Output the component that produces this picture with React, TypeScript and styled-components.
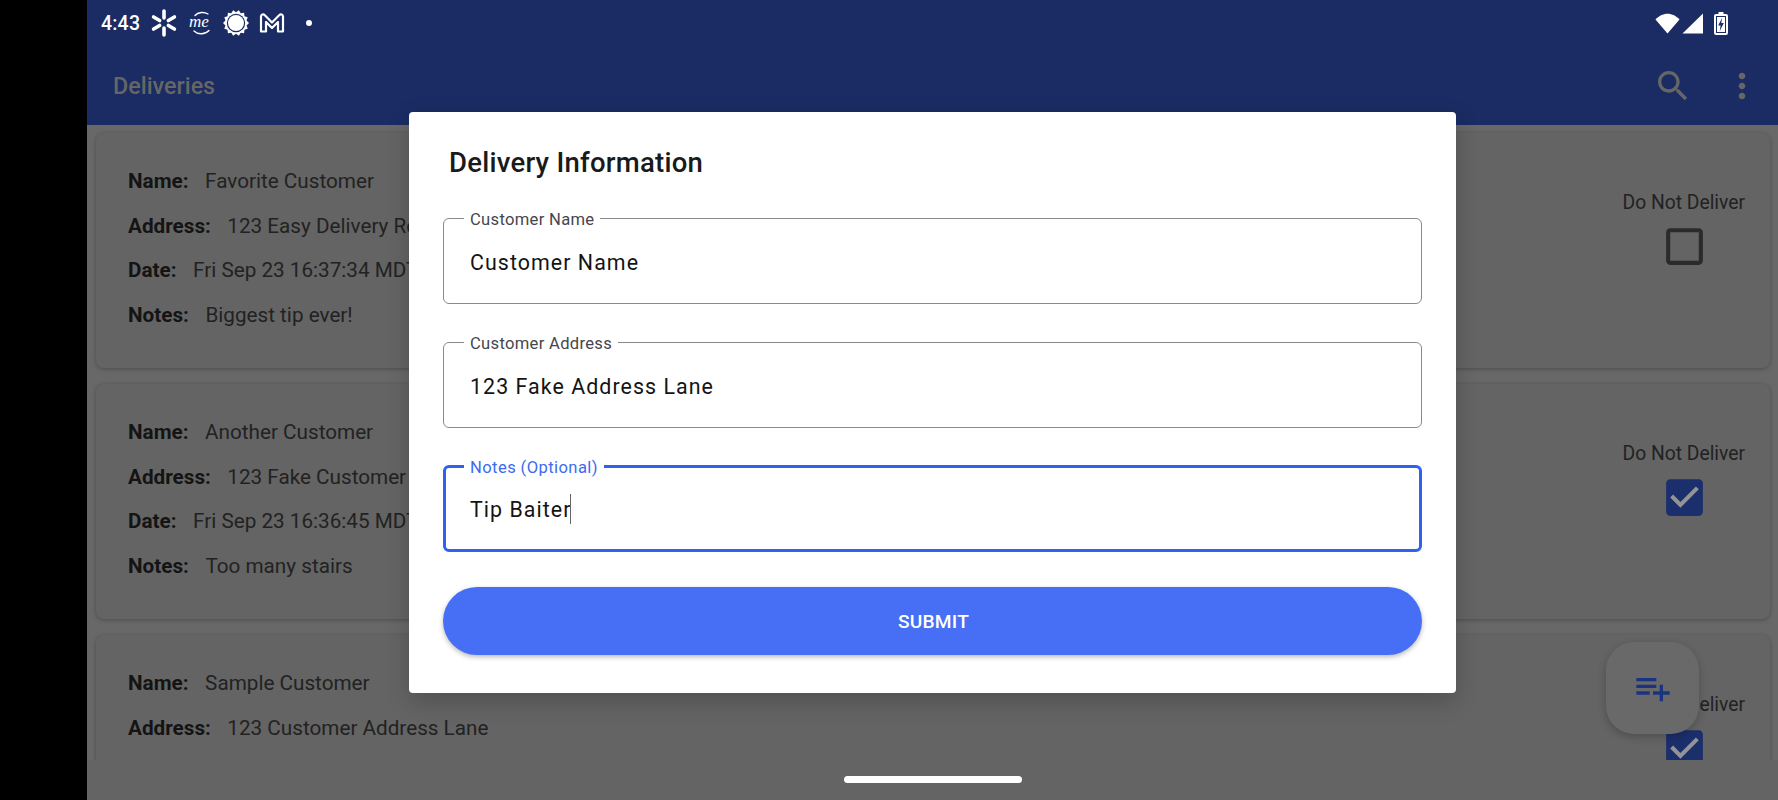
import React from "react";
import styled, { createGlobalStyle } from "styled-components";

const GlobalStyle = createGlobalStyle`
  html, body {
    margin: 0;
    padding: 0;
    height: 100%;
    background: #000;
    font-family: Roboto, "Liberation Sans", sans-serif;
  }
  #root { height: 100%; }
`;

const Page = styled.div`
  display: flex;
  width: 1778px;
  height: 800px;
  overflow: hidden;
  background: #000;
`;

const Letterbox = styled.div`
  width: 87px;
  flex: none;
  background: #000;
`;

const Screen = styled.div`
  position: relative;
  flex: 1;
  display: flex;
  flex-direction: column;
  background: #686868;
  overflow: hidden;
`;

const StatusBar = styled.div`
  height: 46px;
  flex: none;
  display: flex;
  align-items: center;
  justify-content: space-between;
  padding: 0 50px 0 14px;
  background: #1a2c63;
  color: #fff;
`;

const StatusGroup = styled.div`
  display: flex;
  align-items: center;
`;

const Clock = styled.span`
  font-size: 19.5px;
  font-weight: 500;
  letter-spacing: 0.2px;
  margin-right: 9px;
`;

const Toolbar = styled.div`
  height: 79px;
  flex: none;
  display: flex;
  align-items: center;
  padding: 0 16px 0 26px;
  background: #1a2c63;
`;

const ToolbarTitle = styled.div`
  flex: 1;
  font-size: 23.3px;
  font-weight: 500;
  color: #666;
`;

const ToolbarIcon = styled.svg`
  width: 40px;
  height: 40px;
  fill: #666;
  margin-left: 29px;
`;

const List = styled.div`
  flex: 1;
  min-height: 0;
  overflow: hidden;
  display: flex;
  flex-direction: column;
  gap: 16px;
  padding: 8px 8px 0 9px;
`;

const Card = styled.div`
  flex: none;
  height: 235px;
  display: flex;
  justify-content: space-between;
  align-items: flex-start;
  box-sizing: border-box;
  padding: 26px 25px 0 32px;
  background: #646464;
  border-radius: 8px;
  box-shadow: 0 1px 4px rgba(0, 0, 0, 0.28);
`;

const Details = styled.div`
  display: flex;
  flex-direction: column;
`;

const DetailRow = styled.div`
  height: 44.5px;
  display: flex;
  align-items: center;
  font-size: 20.7px;
  color: #222;
`;

const DetailLabel = styled.span`
  font-weight: 700;
  color: #141414;
  margin-right: 16.5px;
`;

const DeliverColumn = styled.div`
  display: flex;
  flex-direction: column;
  align-items: center;
  margin-top: 31px;
`;

const DeliverLabel = styled.div`
  font-size: 19.3px;
  line-height: 26px;
  color: #222;
`;

const CheckIcon = styled.svg`
  width: 49px;
  height: 49px;
  margin-top: 6px;
  margin-left: 1px;
`;

const NavBar = styled.div`
  height: 40px;
  flex: none;
  display: flex;
  align-items: center;
  justify-content: center;
  background: #646464;
  position: relative;
`;

const HomeIndicator = styled.div`
  width: 178px;
  height: 7px;
  border-radius: 4px;
  background: #fff;
  position: relative;
  top: -1px;
`;

const Fab = styled.div`
  position: absolute;
  right: 79px;
  bottom: 66px;
  width: 93px;
  height: 92px;
  display: flex;
  align-items: center;
  justify-content: center;
  border-radius: 28px;
  background: #696969;
  box-shadow: 0 3px 8px rgba(0, 0, 0, 0.22);
`;

const FabIcon = styled.svg`
  width: 40px;
  height: 40px;
  fill: #1c3380;
`;

const Dialog = styled.div`
  position: absolute;
  left: 322px;
  top: 112px;
  width: 1047px;
  height: 581px;
  box-sizing: border-box;
  padding: 0 34px;
  display: flex;
  flex-direction: column;
  background: #fff;
  border-radius: 4px;
  box-shadow: 0 8px 24px rgba(0, 0, 0, 0.2);
`;

const DialogTitle = styled.div`
  margin: 33px 0 0 6px;
  font-size: 27.5px;
  line-height: 36px;
  font-weight: 500;
  color: #1a1a1a;
  letter-spacing: 0.25px;
`;

const FieldBox = styled.fieldset<{ $focused?: boolean }>`
  margin: 27px 0 0;
  padding: 0 24px;
  min-width: 0;
  height: 96px;
  box-sizing: border-box;
  border: ${(p) => (p.$focused ? "3px solid #2e62ef" : "1px solid #8a8a8a")};
  border-radius: 6px;
  display: block;

  & + & {
    margin-top: 28px;
  }
`;

const FieldLegend = styled.legend<{ $focused?: boolean }>`
  margin-left: ${(p) => (p.$focused ? "-6px" : "-4px")};
  padding: 0 6px;
  font-size: 16.6px;
  line-height: 20px;
  letter-spacing: ${(p) => (p.$focused ? "0.4px" : "0.3px")};
  position: relative;
  top: 2px;
  color: ${(p) => (p.$focused ? "#3d6bf2" : "#46464c")};
`;

const FieldValue = styled.div<{ $focused?: boolean }>`
  display: flex;
  align-items: center;
  height: ${(p) => (p.$focused ? "66px" : "68px")};
  margin-left: ${(p) => (p.$focused ? "0" : "2px")};
  font-size: 21.4px;
  letter-spacing: 1.05px;
  color: #141414;
`;

const Caret = styled.span`
  display: inline-block;
  width: 1px;
  height: 30px;
  margin-left: -2px;
  background: #666;
`;

const SubmitButton = styled.button`
  margin-top: 35px;
  height: 68px;
  flex: none;
  border: none;
  border-radius: 34px;
  background: #466ff6;
  color: #fff;
  font-family: inherit;
  font-size: 19.2px;
  font-weight: 500;
  letter-spacing: 0.2px;
  padding-left: 8px;
  box-shadow: 0 2px 5px rgba(0, 0, 0, 0.28);
`;

const WalmartSpark = () => (
  <svg width="30" height="30" viewBox="0 0 30 30" stroke="#fff" strokeWidth="3.6" strokeLinecap="round">
    <path d="M15 3v7M15 20v7M4.6 9l6 3.5M19.4 17.5l6 3.5M25.4 9l-6 3.5M10.6 17.5l-6 3.5" />
  </svg>
);

const MeLogo = () => (
  <svg width="26" height="26" viewBox="0 0 26 26" style={{ marginLeft: 10 }} fill="none" stroke="#fff" strokeWidth="1.4">
    <path d="M6 5.5c3-3.5 9-4 13-1.5" strokeLinecap="round" />
    <path d="M5 21c4 4 11 3.5 15-.5" strokeLinecap="round" />
    <text x="0" y="17" fontFamily="'Liberation Serif', serif" fontStyle="italic" fontWeight="400" fontSize="17" fill="#fff" stroke="none">me</text>
  </svg>
);

const sunPoints = Array.from({ length: 28 }, (_, i) => {
  const r = i % 2 === 0 ? 13 : 10.8;
  const a = (i * Math.PI) / 14;
  return `${(13 + r * Math.cos(a)).toFixed(2)},${(13 + r * Math.sin(a)).toFixed(2)}`;
}).join(" ");

const SunIcon = () => (
  <svg width="26" height="26" viewBox="0 0 26 26" style={{ marginLeft: 8 }}>
    <polygon points={sunPoints} fill="#fff" />
    <circle cx="13" cy="13" r="9.2" fill="#1a2c63" />
    <circle cx="13" cy="13" r="8" fill="#fff" />
  </svg>
);

const GmailIcon = () => (
  <svg width="26" height="22" viewBox="0 0 26 22" style={{ marginLeft: 10 }} fill="none" stroke="#fff" strokeWidth="2.2" strokeLinejoin="round">
    <path d="M2 19.5V4.5C2 2.5 4.3 1.6 5.6 3L13 10.5 20.4 3C21.7 1.6 24 2.5 24 4.5v15h-5V10l-6 6-6-6v9.5z" />
  </svg>
);

const NotificationDot = styled.span`
  width: 6px;
  height: 6px;
  margin-left: 21px;
  border-radius: 50%;
  background: #fff;
`;

const WifiIcon = () => (
  <svg width="25" height="21" viewBox="0 0 25 21">
    <path d="M12.5 20.5L0.5 6.5C3.5 3 8 .7 12.5.7S21.5 3 24.5 6.5z" fill="#fff" />
  </svg>
);

const SignalIcon = () => (
  <svg width="21" height="21" viewBox="0 0 21 21" style={{ marginLeft: 2 }}>
    <path d="M21 .5V20.5H.5z" fill="#fff" />
  </svg>
);

const BatteryIcon = () => (
  <svg width="14" height="23" viewBox="0 0 14 23" style={{ marginLeft: 11 }}>
    <path d="M4.5 0h5v2H12a2 2 0 0 1 2 2v17a2 2 0 0 1-2 2H2a2 2 0 0 1-2-2V4a2 2 0 0 1 2-2h2.5z" fill="#fff" />
    <path d="M2 4h10v17H2z" fill="#1a2c63" />
    <path d="M3 5h8v15H3z" fill="#fff" />
    <path d="M8 6L4.2 13.5H6.6L5.8 19 9.8 11H7.3z" fill="#1a2c63" />
  </svg>
);

const SEARCH_PATH = "M15.5 14h-.79l-.28-.27C15.41 12.59 16 11.11 16 9.5 16 5.91 13.09 3 9.5 3S3 5.91 3 9.5 5.91 16 9.5 16c1.61 0 3.09-.59 4.23-1.57l.27.28v.79l5 4.99L20.49 19l-4.99-5zm-6 0C7.01 14 5 11.99 5 9.5S7.01 5 9.5 5 14 7.01 14 9.5 11.99 14 9.5 14z";
const MORE_PATH = "M12 8c1.1 0 2-.9 2-2s-.9-2-2-2-2 .9-2 2 .9 2 2 2zm0 2c-1.1 0-2 .9-2 2s.9 2 2 2 2-.9 2-2-.9-2-2-2zm0 6c-1.1 0-2 .9-2 2s.9 2 2 2 2-.9 2-2-.9-2-2-2z";
const PLAYLIST_PATH = "M14 10H2v2h12v-2zm0-4H2v2h12V6zm4 8v-4h-2v4h-4v2h4v4h2v-4h4v-2h-4zM2 16h8v-2H2v2z";

const DeliverCheckbox = ({ checked }: { checked: boolean }) => (
  <CheckIcon viewBox="0 0 24 24">
    {checked ? (
      <>
        <path d="M19 3H5c-1.11 0-2 .9-2 2v14c0 1.1.89 2 2 2h14c1.11 0 2-.9 2-2V5c0-1.1-.89-2-2-2z" fill="#1c2f6d" />
        <path d="M10 17l-5-5 1.41-1.41L10 14.17l7.59-7.59L19 8z" fill="#949494" />
      </>
    ) : (
      <path d="M19 5v14H5V5h14m0-2H5c-1.1 0-2 .9-2 2v14c0 1.1.9 2 2 2h14c1.1 0 2-.9 2-2V5c0-1.1-.9-2-2-2z" fill="#2b2b2b" />
    )}
  </CheckIcon>
);

type Delivery = {
  name: string;
  address: string;
  date?: string;
  notes?: string;
  skip: boolean;
};

const deliveries: Delivery[] = [
  { name: "Favorite Customer", address: "123 Easy Delivery Road", date: "Fri Sep 23 16:37:34 MDT", notes: "Biggest tip ever!", skip: false },
  { name: "Another Customer", address: "123 Fake Customer", date: "Fri Sep 23 16:36:45 MDT", notes: "Too many stairs", skip: true },
  { name: "Sample Customer", address: "123 Customer Address Lane", skip: true },
];

const fields = [
  { label: "Customer Name", value: "Customer Name" },
  { label: "Customer Address", value: "123 Fake Address Lane" },
  { label: "Notes (Optional)", value: "Tip Baiter", focused: true },
];

export default function App() {
  return (
    <Page>
      <GlobalStyle />
      <Letterbox />
      <Screen>
        <StatusBar>
          <StatusGroup>
            <Clock>4:43</Clock>
            <WalmartSpark />
            <MeLogo />
            <SunIcon />
            <GmailIcon />
            <NotificationDot />
          </StatusGroup>
          <StatusGroup>
            <WifiIcon />
            <SignalIcon />
            <BatteryIcon />
          </StatusGroup>
        </StatusBar>
        <Toolbar>
          <ToolbarTitle>Deliveries</ToolbarTitle>
          <ToolbarIcon viewBox="0 0 24 24"><path d={SEARCH_PATH} /></ToolbarIcon>
          <ToolbarIcon viewBox="0 0 24 24"><path d={MORE_PATH} /></ToolbarIcon>
        </Toolbar>
        <List>
          {deliveries.map((d) => (
            <Card key={d.name}>
              <Details>
                <DetailRow><DetailLabel>Name:</DetailLabel>{d.name}</DetailRow>
                <DetailRow><DetailLabel>Address:</DetailLabel>{d.address}</DetailRow>
                {d.date && <DetailRow><DetailLabel>Date:</DetailLabel>{d.date}</DetailRow>}
                {d.notes && <DetailRow><DetailLabel>Notes:</DetailLabel>{d.notes}</DetailRow>}
              </Details>
              <DeliverColumn>
                <DeliverLabel>Do Not Deliver</DeliverLabel>
                <DeliverCheckbox checked={d.skip} />
              </DeliverColumn>
            </Card>
          ))}
        </List>
        <NavBar>
          <HomeIndicator />
        </NavBar>
        <Fab>
          <FabIcon viewBox="0 0 24 24"><path d={PLAYLIST_PATH} /></FabIcon>
        </Fab>
        <Dialog>
          <DialogTitle>Delivery Information</DialogTitle>
          {fields.map((f) => (
            <FieldBox key={f.label} $focused={f.focused}>
              <FieldLegend $focused={f.focused}>{f.label}</FieldLegend>
              <FieldValue $focused={f.focused}>
                {f.value}
                {f.focused && <Caret />}
              </FieldValue>
            </FieldBox>
          ))}
          <SubmitButton>SUBMIT</SubmitButton>
        </Dialog>
      </Screen>
    </Page>
  );
}
